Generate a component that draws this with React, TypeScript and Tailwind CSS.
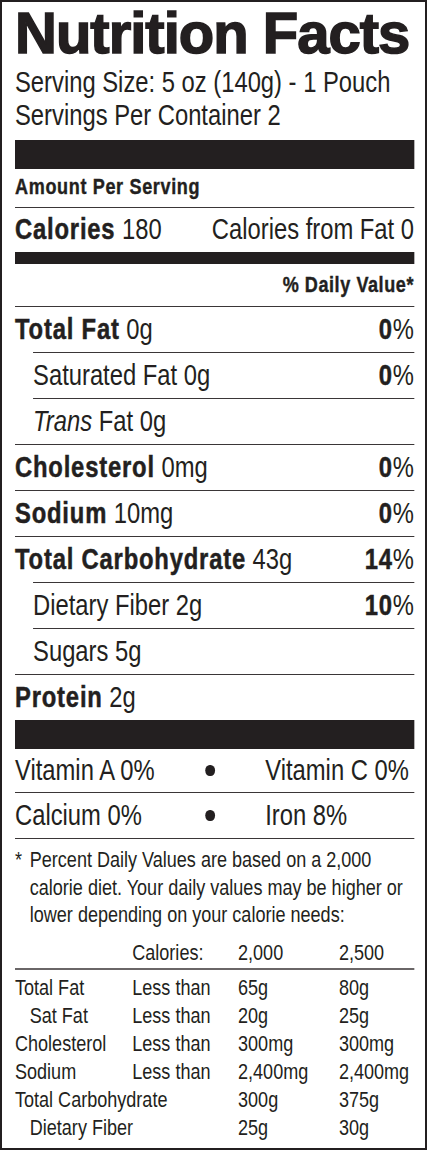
import React from "react";

type Nutrient = {
  label: string;
  amount: string;
  dv?: string;
  sub?: boolean;
  italic?: string;
};

const nutrients: Nutrient[] = [
  { label: "Total Fat", amount: "0g", dv: "0" },
  { label: "Saturated Fat", amount: "0g", dv: "0", sub: true },
  { label: "Fat", amount: "0g", sub: true, italic: "Trans" },
  { label: "Cholesterol", amount: "0mg", dv: "0" },
  { label: "Sodium", amount: "10mg", dv: "0" },
  { label: "Total Carbohydrate", amount: "43g", dv: "14" },
  { label: "Dietary Fiber", amount: "2g", dv: "10", sub: true },
  { label: "Sugars", amount: "5g", sub: true },
  { label: "Protein", amount: "2g" },
];

const limits = [
  { name: "Total Fat", less: true, a: "65g", b: "80g" },
  { name: "Sat Fat", less: true, a: "20g", b: "25g", sub: true },
  { name: "Cholesterol", less: true, a: "300mg", b: "300mg" },
  { name: "Sodium", less: true, a: "2,400mg", b: "2,400mg" },
  { name: "Total Carbohydrate", less: false, a: "300g", b: "375g" },
  { name: "Dietary Fiber", less: false, a: "25g", b: "30g", sub: true },
];

const heavy = "font-bold tracking-[1px] [-webkit-text-stroke:0.5px_#231f20]";

// everything below the title sits in a condensed (scale-x) box,
// so the x values in here are the picture's values / 0.82
const NutrientRow = ({ item }: { item: Nutrient }) => (
  <div
    className={`flex justify-between border-t border-[#3a3637] h-[46px] leading-[45px] text-[29px] ${
      item.sub ? "ml-[22px]" : ""
    }`}
  >
    <p className="whitespace-nowrap">
      {item.italic && <span className="italic">{item.italic} </span>}
      {item.sub ? <span>{item.label}</span> : <span className={heavy}>{item.label}</span>}{" "}
      {item.amount}
    </p>
    {item.dv && (
      <p className="whitespace-nowrap">
        <span className={heavy}>{item.dv}</span>%
      </p>
    )}
  </div>
);

const App = () => {
  return (
    <div className="w-[427px] h-[1150px] overflow-hidden bg-white border-2 border-[#231f20] px-[13px] text-[#231f20] font-['Liberation_Sans',Arial,sans-serif]">
      {/* TITLE */}
      <h1 className="font-black text-[58px] leading-[62px] tracking-[-1px] whitespace-nowrap [-webkit-text-stroke:1.5px_#231f20]">
        Nutrition Facts
      </h1>

      <div className="w-[486.6px] origin-left scale-x-[0.82]">
        {/* SERVING INFO */}
        <div className="mt-[2px] text-[29px] leading-[33px] whitespace-nowrap">
          <p>Serving Size: 5 oz (140g) - 1 Pouch</p>
          <p>Servings Per Container 2</p>
        </div>

        <div className="mt-[8px] h-[29px] bg-[#231f20]" />

        <p className="h-[38px] leading-[36px] text-[22px] font-bold tracking-[0.8px] [-webkit-text-stroke:0.4px_#231f20]">
          Amount Per Serving
        </p>

        {/* CALORIES */}
        <div className="flex justify-between border-t border-[#3a3637] h-[45px] leading-[43px] text-[29px] whitespace-nowrap">
          <p>
            <span className={heavy}>Calories</span> 180
          </p>
          <p>Calories from Fat 0</p>
        </div>

        <div className="h-[12px] bg-[#231f20]" />

        <p className="h-[42px] leading-[42px] text-right text-[22px] font-bold tracking-[0.7px] [-webkit-text-stroke:0.4px_#231f20]">
          % Daily Value*
        </p>

        {/* NUTRIENTS */}
        {nutrients.map((item) => (
          <NutrientRow key={item.label} item={item} />
        ))}

        <div className="h-[29px] bg-[#231f20]" />

        {/* VITAMINS */}
        <div className="flex items-center h-[43px] leading-[43px] text-[29px] whitespace-nowrap">
          <p className="w-[232px] shrink-0">Vitamin A 0%</p>
          <div className="w-[12.2px] h-[11px] shrink-0 rounded-full bg-[#231f20]" />
          <p className="ml-[61px]">Vitamin C 0%</p>
        </div>
        <div className="flex items-center border-t border-[#3a3637] h-[46px] leading-[45px] text-[29px] whitespace-nowrap">
          <p className="w-[232px] shrink-0">Calcium 0%</p>
          <div className="w-[12.2px] h-[11px] shrink-0 rounded-full bg-[#231f20]" />
          <p className="ml-[61px]">Iron 8%</p>
        </div>

        {/* FOOTNOTE */}
        <div className="flex border-t border-[#3a3637] pt-[7px] text-[22px] leading-[27.5px] whitespace-nowrap">
          <span className="w-[18px] shrink-0">*</span>
          <p>
            Percent Daily Values are based on a 2,000
            <br />
            calorie diet. Your daily values may be higher or
            <br />
            lower depending on your calorie needs:
          </p>
        </div>

        {/* DAILY LIMITS TABLE */}
        <div className="mt-[10px] text-[22px] leading-[28px] whitespace-nowrap">
          <div className="grid grid-cols-[143px_129px_123px_1fr]">
            <span />
            <span>Calories:</span>
            <span>2,000</span>
            <span>2,500</span>
          </div>
          <div className="h-[2px] bg-[#6a6667] mt-[1px] mb-[4px]" />
          {limits.map((row) => (
            <div key={row.name} className="grid grid-cols-[143px_129px_123px_1fr]">
              <span className={row.sub ? "pl-[18px]" : ""}>{row.name}</span>
              <span>{row.less ? "Less than" : ""}</span>
              <span>{row.a}</span>
              <span>{row.b}</span>
            </div>
          ))}
        </div>
      </div>
    </div>
  );
};

export default App;
